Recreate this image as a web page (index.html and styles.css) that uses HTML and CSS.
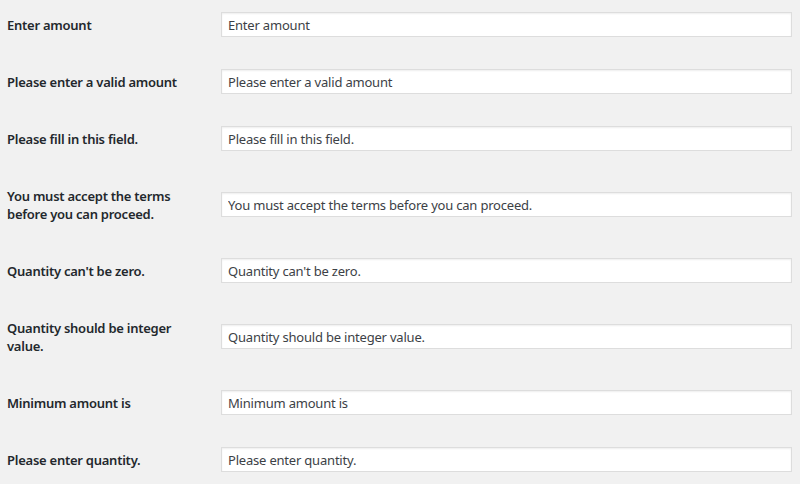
FILE: index.html
```html
<!DOCTYPE html>
<html lang="en">
<head>
  <meta charset="UTF-8" />
  <title>Messages</title>
  <link rel="stylesheet" href="styles.css">
</head>
<body>
  <div class="form-table">
    <div class="row">
      <label class="row-label" for="m1">Enter amount</label>
      <input class="regular-text" type="text" id="m1" value="Enter amount" />
    </div>
    <div class="row">
      <label class="row-label" for="m2">Please enter a valid amount</label>
      <input class="regular-text" type="text" id="m2" value="Please enter a valid amount" />
    </div>
    <div class="row">
      <label class="row-label" for="m3">Please fill in this field.</label>
      <input class="regular-text" type="text" id="m3" value="Please fill in this field." />
    </div>
    <div class="row">
      <label class="row-label" for="m4">You must accept the terms before you can proceed.</label>
      <input class="regular-text" type="text" id="m4" value="You must accept the terms before you can proceed." />
    </div>
    <div class="row">
      <label class="row-label" for="m5">Quantity can't be zero.</label>
      <input class="regular-text" type="text" id="m5" value="Quantity can't be zero." />
    </div>
    <div class="row">
      <label class="row-label" for="m6">Quantity should be integer value.</label>
      <input class="regular-text" type="text" id="m6" value="Quantity should be integer value." />
    </div>
    <div class="row">
      <label class="row-label" for="m7">Minimum amount is</label>
      <input class="regular-text" type="text" id="m7" value="Minimum amount is" />
    </div>
    <div class="row">
      <label class="row-label" for="m8">Please enter quantity.</label>
      <input class="regular-text" type="text" id="m8" value="Please enter quantity." />
    </div>
  </div>
</body>
</html>
```

FILE: styles.css
```css
* {
  box-sizing: border-box;
}

html, body {
  margin: 0;
  padding: 0;
}

body {
  background: #f1f1f1;
  color: #23282d;
  font-family: 'Noto Sans', 'Open Sans', sans-serif;
  font-size: 13px;
  overflow: hidden;
}

.form-table {
  margin-top: -4px;
  padding-left: 7px;
}

.row {
  display: flex;
  align-items: center;
}

.row-label {
  width: 214px;
  padding: 19.5px 24px 19.5px 0;
  line-height: 18px;
  font-weight: 600;
  letter-spacing: -0.25px;
  color: #23282d;
}

.regular-text {
  width: 571px;
  height: 25px;
  padding: 0 6px;
  border: 1px solid #ddd;
  background: #fff;
  box-shadow: inset 0 1px 2px rgba(0, 0, 0, 0.07);
  color: #3c4146;
  font-family: inherit;
  font-size: 13px;
  letter-spacing: -0.2px;
  outline: none;
}
```
